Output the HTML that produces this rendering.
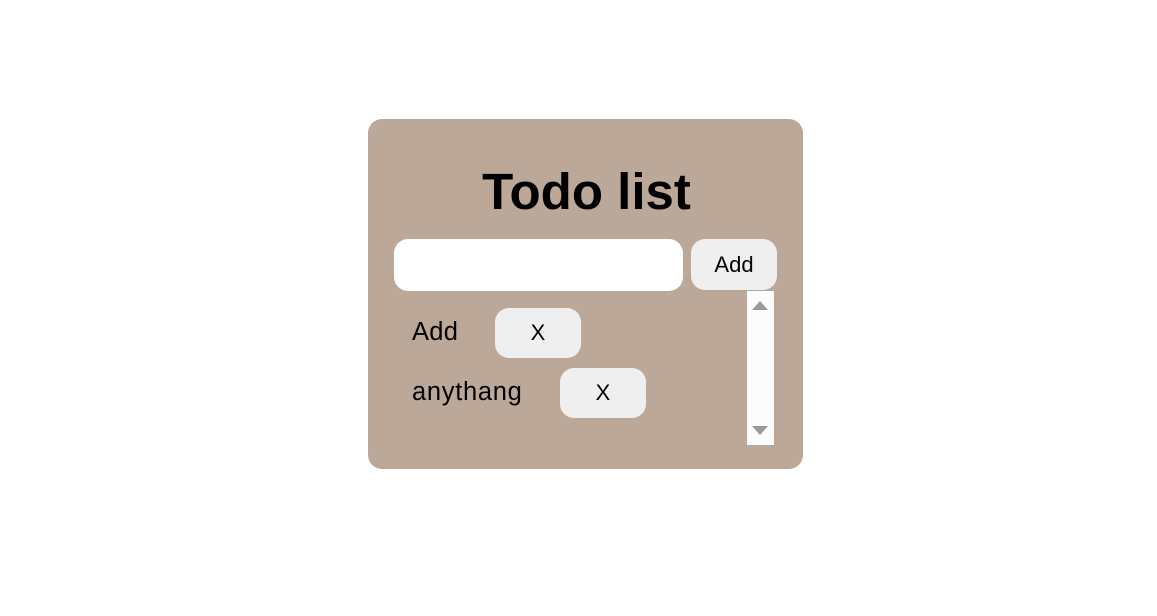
<!DOCTYPE html>
<html><head><style>
body{margin:0;width:1157px;height:616px;background:#fff;font-family:"Liberation Sans",Arial,sans-serif;position:relative;overflow:hidden}
.card{position:absolute;left:368px;top:119px;width:435px;height:350px;background:#bca899;border-radius:14px}
.t{position:absolute;top:164px;font-size:51px;font-weight:bold;line-height:56px;text-align:center}
.inp{position:absolute;left:394px;top:239px;width:289px;height:52px;background:#fff;border-radius:14px}
.btn{position:absolute;background:#efefef;border-radius:14px;font-size:22px;display:flex;align-items:center;justify-content:center}
.txt{position:absolute;left:412px;font-size:25.5px;line-height:30px}
.sb{position:absolute;left:747px;top:291px;width:27px;height:154px;background:#fcfcfc}
.up{position:absolute;left:5px;top:10px;border-left:8px solid transparent;border-right:8px solid transparent;border-bottom:9px solid #999}
.dn{position:absolute;left:5px;bottom:10px;border-left:8px solid transparent;border-right:8px solid transparent;border-top:9px solid #999}
</style></head><body>
<div class="card"></div>
<div class="t" style="left:0;width:1173px">Todo list</div>
<div class="inp"></div>
<div class="btn" style="left:691px;top:239px;width:86px;height:51px">Add</div>
<div class="sb"><div class="up"></div><div class="dn"></div></div>
<div class="txt" style="top:317px;letter-spacing:0.3px">Add</div>
<div class="btn" style="left:495px;top:308px;width:86px;height:50px">X</div>
<div class="txt" style="top:377px;letter-spacing:0.7px">anythang</div>
<div class="btn" style="left:560px;top:368px;width:86px;height:50px">X</div>
</body></html>
